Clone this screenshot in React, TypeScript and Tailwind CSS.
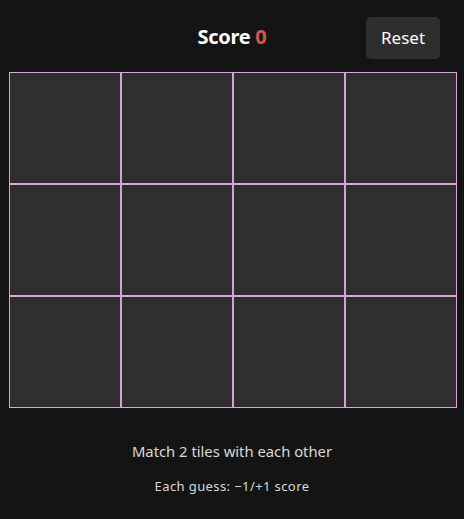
import React from "react";

export default function App() {
  const tiles = Array.from({ length: 12 });
  return (
    <div
      className="w-[464px] h-[519px] bg-[#141414] text-white"
      style={{ fontFamily: '"Noto Sans", "Open Sans", sans-serif' }}
    >
      <div className="relative h-[72px] flex items-center justify-center">
        <div className="text-[20px] font-bold leading-none tracking-[-0.3px] mt-[2px]">
          Score <span className="text-[#d9534f]">0</span>
        </div>
        <button className="absolute right-[24px] top-[17px] w-[74px] h-[42px] rounded-[5px] bg-[#2e2e2e] text-[17px] text-white">
          Reset
        </button>
      </div>
      <div className="ml-[9px] grid grid-cols-4 w-[448px]">
        {tiles.map((_, i) => (
          <div
            key={i}
            className="h-[112px] bg-[#2f2f2f] border border-[#dd9fdd]"
          />
        ))}
      </div>
      <div className="mt-[33px] text-center text-[14.8px] text-[#d8d8d8] leading-5">
        Match 2 tiles with each other
      </div>
      <div className="mt-[15px] text-center text-[13px] tracking-[0.4px] text-[#d8d8d8] leading-5">
        Each guess: −1/+1 score
      </div>
    </div>
  );
}
